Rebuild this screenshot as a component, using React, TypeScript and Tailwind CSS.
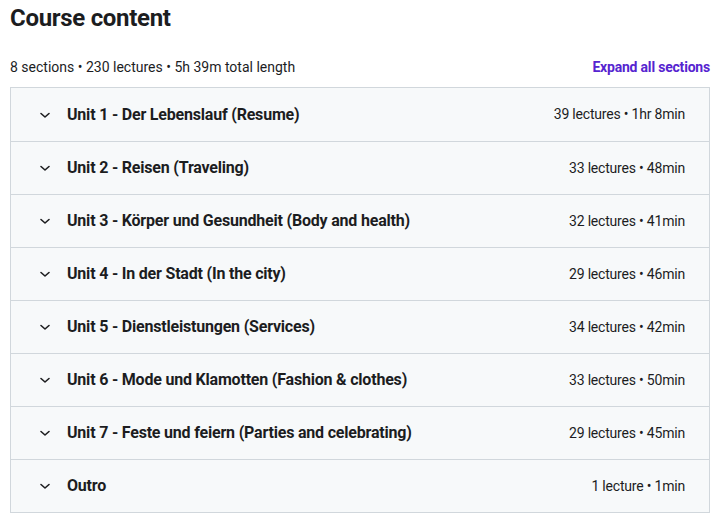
const sections = [
  { title: "Unit 1 - Der Lebenslauf (Resume)", meta: "39 lectures • 1hr 8min" },
  { title: "Unit 2 - Reisen (Traveling)", meta: "33 lectures • 48min" },
  { title: "Unit 3 - Körper und Gesundheit (Body and health)", meta: "32 lectures • 41min" },
  { title: "Unit 4 - In der Stadt (In the city)", meta: "29 lectures • 46min" },
  { title: "Unit 5 - Dienstleistungen (Services)", meta: "34 lectures • 42min" },
  { title: "Unit 6 - Mode und Klamotten (Fashion & clothes)", meta: "33 lectures • 50min" },
  { title: "Unit 7 - Feste und feiern (Parties and celebrating)", meta: "29 lectures • 45min" },
  { title: "Outro", meta: "1 lecture • 1min" },
];

function Chevron() {
  return (
    <svg viewBox="0 0 12 12" className="w-[12px] h-[12px] shrink-0" fill="none">
      <path d="M2 4.5 L6 8 L10 4.5" stroke="#1c1d1f" strokeWidth="1.6" strokeLinecap="round" strokeLinejoin="round" />
    </svg>
  );
}

export default function App() {
  return (
    <div className="w-[720px] h-[522px] bg-white px-[10px] text-[#1c1d1f] font-['Roboto',sans-serif]">
      <h2 className="pt-[3px] text-[24px] leading-[30px] font-bold tracking-[-0.3px]">Course content</h2>
      <div className="mt-[24px] flex items-center justify-between text-[14px] leading-[20px]">
        <span>8 sections • 230 lectures • 5h 39m total length</span>
        <button className="font-bold text-[#5624d0] tracking-[-0.2px]">Expand all sections</button>
      </div>
      <div className="mt-[10px] border border-[#d1d7dc]">
        {sections.map((s, i) => (
          <div
            key={i}
            className={
              "h-[53px] bg-[#f7f9fa] flex items-center pl-[28px] pr-[24px] " +
              (i > 0 ? "border-t border-[#d1d7dc]" : "")
            }
          >
            <Chevron />
            <span className="ml-[16px] flex-1 text-[16px] font-bold tracking-[-0.2px]">{s.title}</span>
            <span className="text-[14px] tracking-[-0.2px]">{s.meta}</span>
          </div>
        ))}
      </div>
    </div>
  );
}
